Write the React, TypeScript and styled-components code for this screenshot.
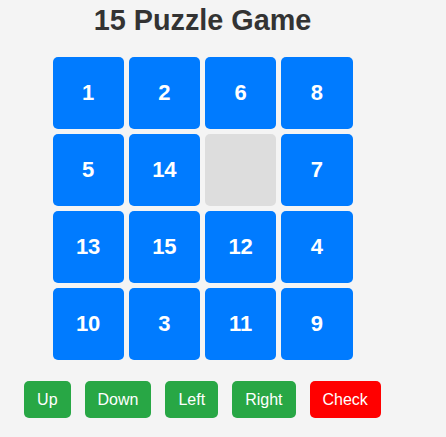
import React from "react";
import styled, { createGlobalStyle } from "styled-components";

const Global = createGlobalStyle`
  html, body {
    margin: 0;
    padding: 0;
    background: #f4f4f4;
    font-family: "Liberation Sans", Arial, sans-serif;
  }
`;

const Page = styled.div`
  width: 405px;
  display: flex;
  flex-direction: column;
  align-items: center;
`;

const Title = styled.h1`
  margin: 4px 0 20px;
  font-size: 28.8px;
  font-weight: bold;
  line-height: normal;
  color: #333;
`;

const Board = styled.div`
  width: 300px;
  display: grid;
  grid-template-columns: repeat(4, 1fr);
  grid-auto-rows: 72px;
  gap: 5px;
`;

const Tile = styled.div<{ $empty?: boolean }>`
  display: flex;
  align-items: center;
  justify-content: center;
  border-radius: 5px;
  background: ${(p) => (p.$empty ? "#dddddd" : "#007bff")};
  color: #fff;
  font-size: 22px;
  font-weight: bold;
`;

const Controls = styled.div`
  margin-top: 21px;
  display: flex;
  gap: 14px;
`;

const Button = styled.button<{ $danger?: boolean }>`
  border: none;
  border-radius: 5px;
  padding: 9px 13px;
  font-family: "Liberation Sans", Arial, sans-serif;
  font-size: 16px;
  line-height: 19px;
  color: #fff;
  background: ${(p) => (p.$danger ? "#ff0000" : "#28a745")};
  cursor: pointer;
`;

const tiles = [1, 2, 6, 8, 5, 14, 0, 7, 13, 15, 12, 4, 10, 3, 11, 9];

export default function App() {
  return (
    <>
      <Global />
      <Page>
        <Title>15 Puzzle Game</Title>
        <Board>
          {tiles.map((n, i) => (
            <Tile key={i} $empty={n === 0}>
              {n === 0 ? "" : n}
            </Tile>
          ))}
        </Board>
        <Controls>
          <Button>Up</Button>
          <Button>Down</Button>
          <Button>Left</Button>
          <Button>Right</Button>
          <Button $danger>Check</Button>
        </Controls>
      </Page>
    </>
  );
}
